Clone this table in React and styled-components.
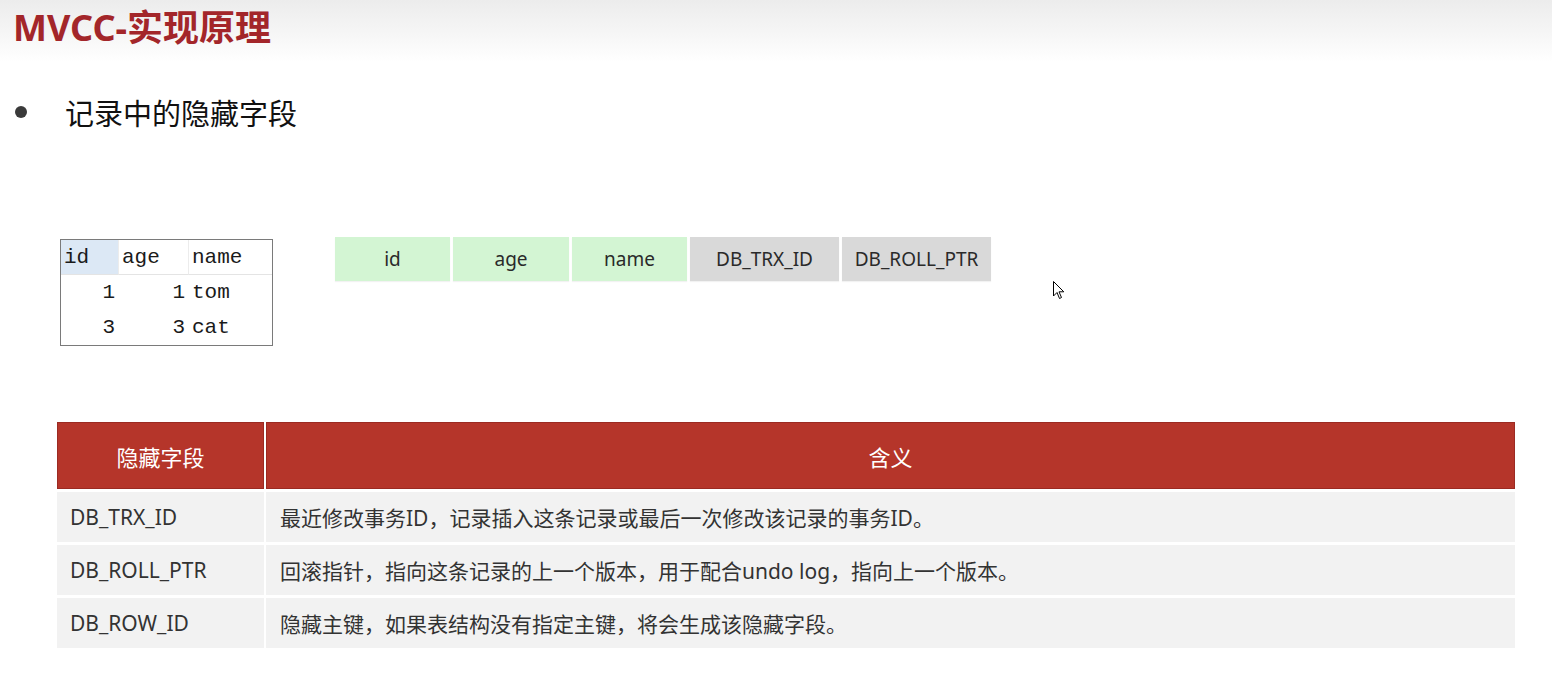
import styled, { createGlobalStyle } from "styled-components";

const Global = createGlobalStyle`
  html, body { margin: 0; padding: 0; background: #fff; }
  body { font-family: "Noto Sans", "Noto Sans CJK SC", sans-serif; color: #222; }
`;

const Slide = styled.div`
  position: relative;
  width: 1552px;
  height: 695px;
  overflow: hidden;
  background: #fff;
`;

const Header = styled.div`
  height: 62px;
  padding-left: 13px;
  background: linear-gradient(to bottom, #ececec 0%, #f6f6f6 55%, #ffffff 100%);
  display: flex;
  align-items: center;
`;

const Title = styled.h1`
  margin: 0;
  font-family: "Noto Sans", "Noto Sans CJK SC", sans-serif;
  font-size: 36px;
  font-weight: 700;
  color: #a3262a;
  line-height: 1;
  margin-top: -6px;
`;

const Bullet = styled.div`
  display: flex;
  align-items: center;
  margin-top: 30px;
  padding-left: 15px;
  height: 40px;
`;

const Dot = styled.span`
  width: 12px;
  height: 12px;
  border-radius: 50%;
  background: #3a3a3a;
  margin-right: 38px;
`;

const BulletText = styled.span`
  font-family: "Noto Sans CJK SC", sans-serif;
  font-size: 29px;
  color: #111;
`;

const Samples = styled.div`
  display: flex;
  align-items: flex-start;
  margin-top: 105px;
  padding-left: 60px;
`;

const MiniTable = styled.div`
  width: 211px;
  border: 1px solid #7a7a7a;
  display: grid;
  grid-template-columns: 58px 70px 1fr;
  font-family: "Liberation Mono", "DejaVu Sans Mono", monospace;
  font-size: 21px;
  color: #1a1a1a;
  margin-top: 2px;
`;

const MiniHead = styled.div`
  height: 34px;
  display: flex;
  align-items: center;
  padding-left: 3px;
  border-bottom: 1px solid #e4e4e4;
  border-right: ${(p) => (p.$last ? "none" : "1px solid #ececec")};
  background: ${(p) => (p.$active ? "#dce8f5" : "#fff")};
`;

const MiniCell = styled.div`
  height: 35px;
  display: flex;
  align-items: center;
  justify-content: ${(p) => (p.$right ? "flex-end" : "flex-start")};
  padding: 0 4px 0 3px;
`;

const Fields = styled.div`
  display: flex;
  gap: 3px;
  margin-left: 62px;
`;

const Field = styled.div`
  width: ${(p) => p.$w}px;
  height: 44px;
  display: flex;
  align-items: center;
  justify-content: center;
  background: ${(p) => (p.$hidden ? "#d9d9d9" : "#d3f5d3")};
  box-shadow: 0 1px 1px rgba(0, 0, 0, 0.05);
  font-family: "Noto Sans", sans-serif;
  font-size: 19px;
  color: #2a2a2a;
`;

const Table = styled.div`
  margin: 76px 0 0 57px;
  width: 1458px;
  display: grid;
  grid-template-columns: 207px 1fr;
  column-gap: 2px;
  row-gap: 3px;
`;

const Th = styled.div`
  height: 67px;
  background: #b5352a;
  border: 1px solid #9b2a22;
  box-sizing: border-box;
  display: flex;
  align-items: center;
  justify-content: center;
  font-family: "Noto Sans CJK SC", sans-serif;
  font-size: 22px;
  color: #fff;
`;

const Td = styled.div`
  height: 50px;
  background: #f2f2f2;
  display: flex;
  align-items: center;
  padding-left: ${(p) => (p.$first ? "13px" : "14px")};
  font-family: "Noto Sans", "Noto Sans CJK SC", sans-serif;
  font-size: 21px;
  color: #333;
`;

const Cursor = styled.svg`
  position: absolute;
  left: 1053px;
  top: 281px;
`;

const fields = [
  { name: "id", w: 115 },
  { name: "age", w: 116 },
  { name: "name", w: 115 },
  { name: "DB_TRX_ID", w: 149, hidden: true },
  { name: "DB_ROLL_PTR", w: 149, hidden: true },
];

const rows = [
  ["DB_TRX_ID", "最近修改事务ID，记录插入这条记录或最后一次修改该记录的事务ID。"],
  ["DB_ROLL_PTR", "回滚指针，指向这条记录的上一个版本，用于配合undo log，指向上一个版本。"],
  ["DB_ROW_ID", "隐藏主键，如果表结构没有指定主键，将会生成该隐藏字段。"],
];

export default function App() {
  return (
    <>
      <Global />
      <Slide>
        <Header>
          <Title>MVCC-实现原理</Title>
        </Header>
        <Bullet>
          <Dot />
          <BulletText>记录中的隐藏字段</BulletText>
        </Bullet>
        <Samples>
          <MiniTable>
            <MiniHead $active>id</MiniHead>
            <MiniHead>age</MiniHead>
            <MiniHead $last>name</MiniHead>
            <MiniCell $right>1</MiniCell>
            <MiniCell $right>1</MiniCell>
            <MiniCell>tom</MiniCell>
            <MiniCell $right>3</MiniCell>
            <MiniCell $right>3</MiniCell>
            <MiniCell>cat</MiniCell>
          </MiniTable>
          <Fields>
            {fields.map((f) => (
              <Field key={f.name} $w={f.w} $hidden={f.hidden}>
                {f.name}
              </Field>
            ))}
          </Fields>
        </Samples>
        <Table>
          <Th>隐藏字段</Th>
          <Th>含义</Th>
          {rows.flatMap(([k, v]) => [
            <Td key={k} $first>{k}</Td>,
            <Td key={k + "v"}>{v}</Td>,
          ])}
        </Table>
        <Cursor width="12" height="20" viewBox="0 0 12 20">
          <path d="M0.5 0.5 L0.5 15 L4 11.5 L6.5 17.5 L8.5 16.5 L6 10.8 L10.8 10.8 Z" fill="#fff" stroke="#000" strokeWidth="1" strokeLinejoin="round" />
        </Cursor>
      </Slide>
    </>
  );
}
